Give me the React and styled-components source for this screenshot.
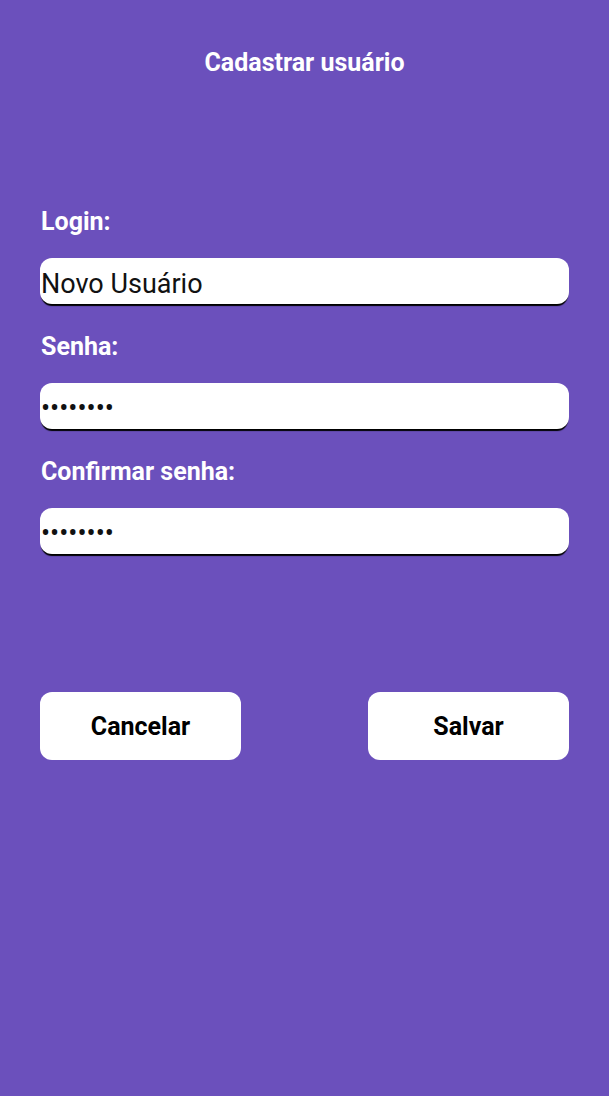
import React from 'react';
import styled, { createGlobalStyle } from 'styled-components';

const GlobalStyle = createGlobalStyle`
    body {
        margin: 0;
        background-color: #6b50bc;
        font-family: Roboto, 'Noto Sans', sans-serif;
    }
`;

const Screen = styled.main`
    width: 100%;
    min-height: 1096px;
    box-sizing: border-box;
    background-color: #6b50bc;
    padding: 49px 40px 0 40px;
    display: flex;
    flex-direction: column;
`;

const Title = styled.h1`
    margin: 0;
    color: #fff;
    font-size: 25px;
    line-height: 28px;
    font-weight: 700;
    text-align: center;
`;

const Form = styled.form`
    margin-top: 131px;
    display: flex;
    flex-direction: column;
`;

const Field = styled.div`
    display: flex;
    flex-direction: column;
    gap: 22px;
    margin-bottom: 29px;
`;

const Label = styled.label`
    color: #fff;
    font-size: 25px;
    line-height: 28px;
    font-weight: 700;
    padding-left: 1px;
`;

const Input = styled.input`
    height: 46px;
    box-sizing: border-box;
    width: 100%;
    border: none;
    outline: none;
    border-radius: 12px;
    background: #fff;
    padding: ${props => (props.type === 'password' ? '3px 0 0 1px' : '6px 0 0 1px')};
    font-family: Roboto, sans-serif;
    font-size: ${props => (props.type === 'password' ? '27px' : '27px')};
    color: #111;
    box-shadow: 0 3px 1px -1px #000;
`;

const Actions = styled.div`
    margin-top: 109px;
    display: flex;
    justify-content: space-between;
`;

const Button = styled.button`
    width: 201px;
    height: 68px;
    border: none;
    border-radius: 12px;
    background: #fff;
    color: #000;
    font-family: Roboto, sans-serif;
    font-size: 25px;
    font-weight: 700;
    cursor: pointer;
`;

const App = () => {
    return (
        <>
            <GlobalStyle />
            <Screen>
                <Title>Cadastrar usuário</Title>
                <Form onSubmit={e => e.preventDefault()}>
                    <Field>
                        <Label htmlFor='login'>Login:</Label>
                        <Input id='login' type='text' defaultValue='Novo Usuário' />
                    </Field>
                    <Field>
                        <Label htmlFor='senha'>Senha:</Label>
                        <Input id='senha' type='password' defaultValue='12345678' />
                    </Field>
                    <Field>
                        <Label htmlFor='confirmar'>Confirmar senha:</Label>
                        <Input id='confirmar' type='password' defaultValue='12345678' />
                    </Field>
                </Form>
                <Actions>
                    <Button type='button'>Cancelar</Button>
                    <Button type='button'>Salvar</Button>
                </Actions>
            </Screen>
        </>
    );
};

export default App;
